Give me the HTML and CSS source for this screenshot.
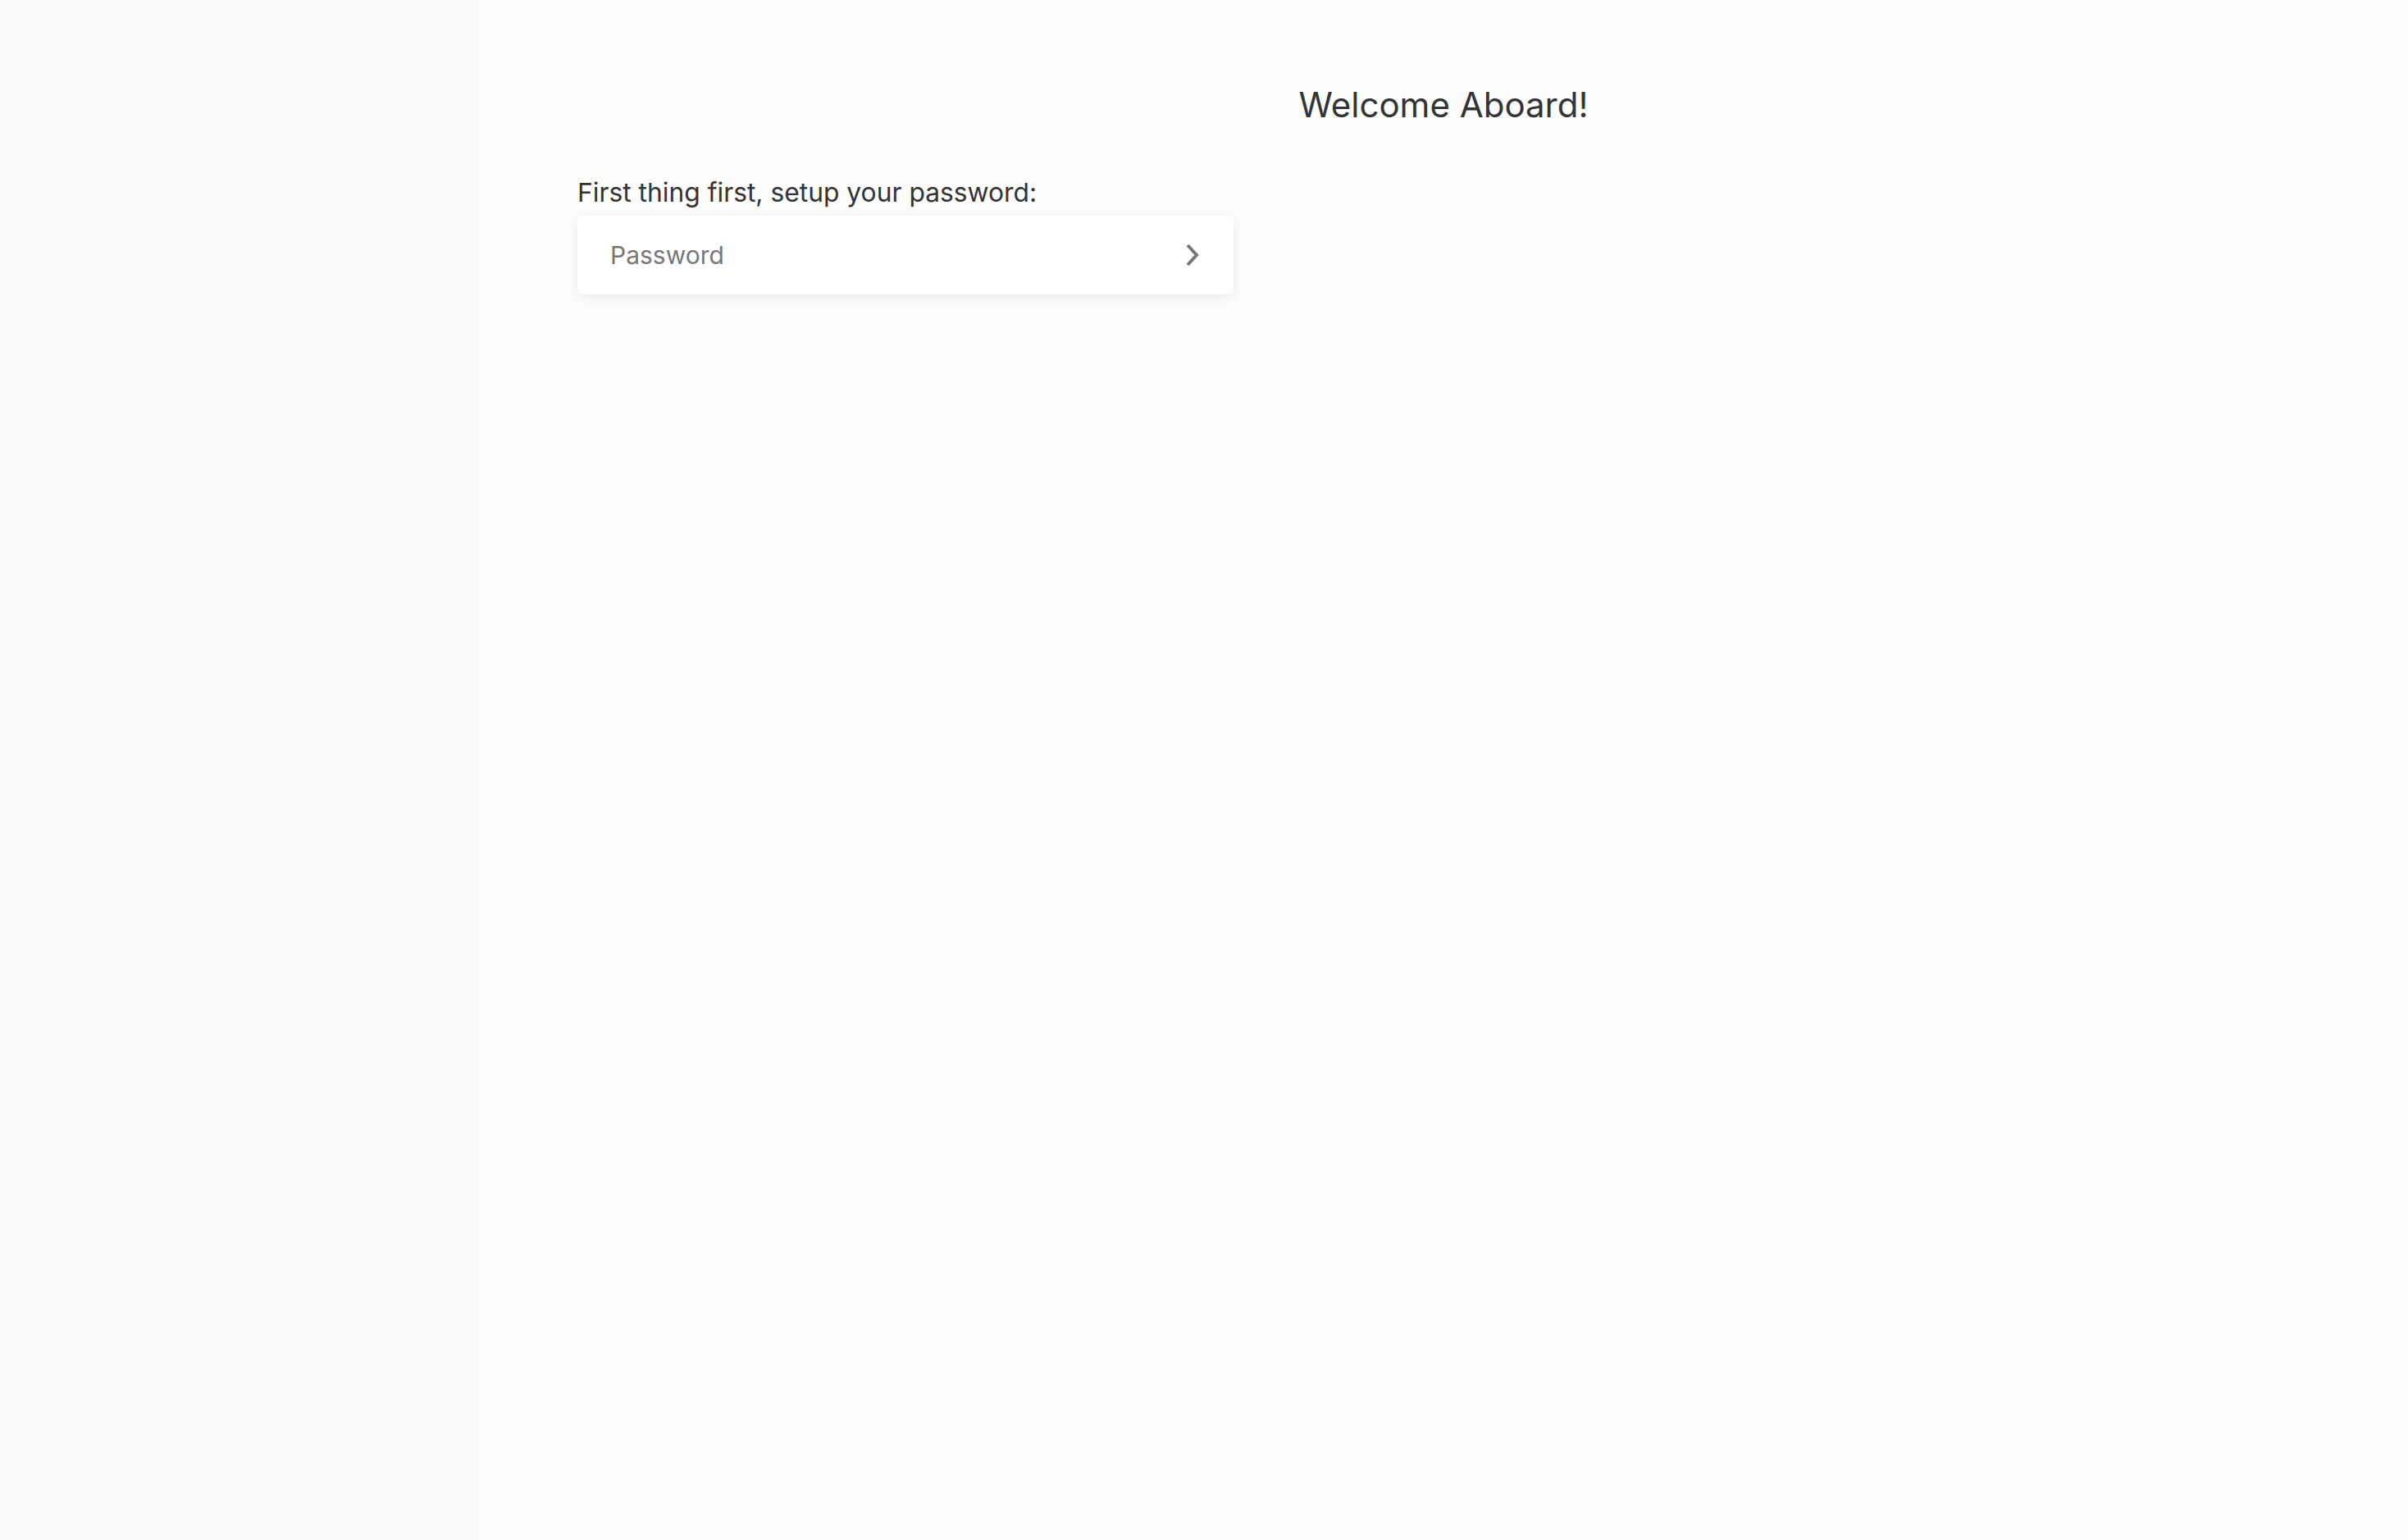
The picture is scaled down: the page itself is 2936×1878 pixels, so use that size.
FILE: index.html
```html
<html>

<head>
    <title>Welcome Aboard</title>
    <link rel="stylesheet" href="styles.css">
</head>

<body>
    <div class="sidebar"></div>

    <div class="main">
        <h1 class="title">Welcome Aboard!</h1>

        <div class="setup-form">
            <label class="setup-label" for="password">First thing first, setup your password:</label>
            <div class="password-box">
                <input id="password" class="password-input" type="password" placeholder="Password">
                <button class="next-button" type="button">
                    <!-- chevron right -->
                    <svg width="18" height="28" viewBox="0 0 18 28">
                        <path d="M3 2 L14 14 L3 26" fill="none" stroke="#777777" stroke-width="4" />
                    </svg>
                </button>
            </div>
        </div>
    </div>
</body>

</html>
```

FILE: styles.css
```css
body {
    margin: 0;
    display: flex;
    min-height: 100vh;
    background: #fcfcfb;
    color: #333437;
    font-family: Inter, 'Liberation Sans', sans-serif;
}

.sidebar {
    width: 584px;
    flex-shrink: 0;
    background: #f9f9f9;
}

.main {
    flex: 1;
    padding: 102px 120px 0 120px;
}

.title {
    margin: 0;
    font-size: 42px;
    font-weight: 400;
    line-height: 52px;
    text-align: center;
}

.setup-form {
    margin-top: 61px;
    width: 800px;
}

.setup-label {
    display: block;
    font-size: 31.8px;
    line-height: 40px;
    margin-bottom: 8px;
}

.password-box {
    display: flex;
    align-items: center;
    height: 96px;
    background: #ffffff;
    border-radius: 6px;
    box-shadow: 0 3px 14px rgba(0, 0, 0, 0.08);
}

.password-input {
    flex: 1;
    border: none;
    outline: none;
    background: transparent;
    padding: 0 0 0 40px;
    font-family: Inter, 'Liberation Sans', sans-serif;
    font-size: 30px;
    color: #333437;
}

.password-input::placeholder {
    color: #777777;
}

.next-button {
    border: none;
    background: transparent;
    padding: 0;
    margin-right: 38px;
    width: 24px;
    height: 40px;
    display: flex;
    align-items: center;
    justify-content: center;
    cursor: pointer;
}
```
